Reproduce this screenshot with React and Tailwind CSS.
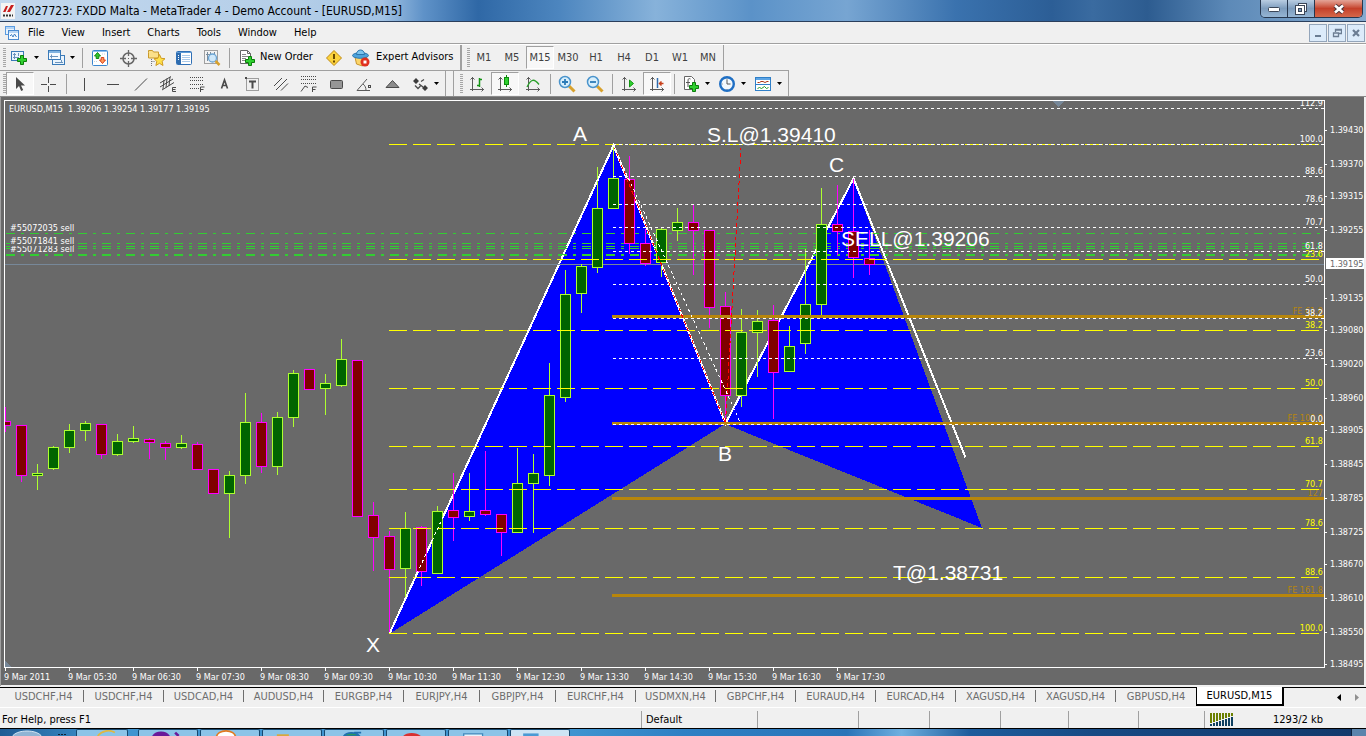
import clsx from 'clsx';

const menuItems = ['File', 'View', 'Insert', 'Charts', 'Tools', 'Window', 'Help'];
const periods = ['M1', 'M5', 'M15', 'M30', 'H1', 'H4', 'D1', 'W1', 'MN'];

const chartTabs = [
  'USDCHF,H4', 'USDCHF,H4', 'USDCAD,H4', 'AUDUSD,H4', 'EURGBP,H4', 'EURJPY,H4', 'GBPJPY,H4', 'EURCHF,H4',
  'USDMXN,H4', 'GBPCHF,H4', 'EURAUD,H4', 'EURCAD,H4', 'XAGUSD,H4', 'XAGUSD,H4', 'GBPUSD,H4',
];
const narrowTabs = ['EURJPY,H4', 'GBPJPY,H4'];

// One candle every 16px: [direction, high, body top, body bottom, low]
const candles = [
  ['d', 407, 421, 426, 432], ['d', 425, 425, 476, 482], ['u', 464, 473, 476, 490], ['u', 446, 447, 469, 470],
  ['u', 424, 430, 448, 453], ['u', 421, 423, 431, 441], ['d', 424, 424, 455, 459], ['u', 434, 441, 455, 456],
  ['u', 426, 438, 442, 443], ['d', 438, 439, 443, 459], ['d', 441, 443, 448, 460], ['u', 435, 443, 448, 449],
  ['d', 442, 444, 470, 470], ['d', 469, 469, 494, 494], ['u', 471, 475, 494, 538], ['u', 393, 422, 476, 484],
  ['d', 413, 422, 467, 473], ['u', 412, 417, 467, 475], ['u', 370, 373, 418, 427], ['d', 369, 369, 390, 390],
  ['u', 374, 383, 389, 415], ['u', 339, 359, 386, 387], ['d', 360, 360, 517, 517], ['d', 502, 515, 538, 571],
  ['d', 531, 536, 570, 633], ['u', 512, 528, 569, 597], ['d', 526, 527, 572, 586], ['u', 506, 511, 574, 574],
  ['d', 473, 510, 518, 541], ['u', 473, 511, 517, 521], ['d', 451, 510, 515, 516], ['d', 514, 514, 533, 556],
  ['u', 448, 483, 533, 533], ['u', 454, 473, 484, 533], ['u', 363, 395, 476, 486], ['u', 270, 294, 398, 402],
  ['u', 264, 266, 294, 313], ['u', 167, 208, 268, 273], ['u', 145, 178, 209, 209], ['d', 156, 179, 244, 254],
  ['d', 229, 243, 264, 266], ['u', 227, 229, 263, 277], ['u', 208, 222, 231, 241], ['d', 204, 222, 231, 275],
  ['d', 230, 230, 308, 328], ['d', 292, 306, 396, 421], ['u', 309, 332, 396, 407], ['u', 310, 321, 333, 377],
  ['d', 305, 320, 373, 419], ['u', 326, 346, 372, 372], ['u', 249, 304, 344, 354], ['u', 188, 224, 305, 315],
  ['d', 185, 224, 232, 255], ['d', 179, 231, 258, 278], ['d', 230, 258, 265, 275],
];

const yellowLevels = [[144, ''], [259, '23.6'], [330, '38.2'], [388, '50.0'], [446, '61.8'], [489, '70.7'], [528, '78.6'], [577, '88.6'], [633, '100.0']];
const whiteLevels = [
  [108, '112.9'], [144, '100.0'], [176, '88.6'], [204, '78.6'], [227, '70.7'], [251, '61.8'],
  [284, '50.0'], [318, '38.2'], [358, '23.6'], [424, '0.0'],
];
const goldLevels = [[316, 'FE 61.8'], [423, 'FE 100.0'], [498, '127'], [595, 'FE 161.8']];
const orderLines = [233, 243, 246, 248, 254, 255];
const orders = [['#55071283 sell', 252], ['#55071841 sell', 244], ['#55072035 sell', 231]];

const prices = [
  ['1.39430', 130], ['1.39370', 164], ['1.39315', 196], ['1.39255', 230], ['1.39135', 298], ['1.39080', 330],
  ['1.39020', 364], ['1.38960', 398], ['1.38905', 430], ['1.38845', 464], ['1.38785', 498], ['1.38725', 532],
  ['1.38670', 564], ['1.38610', 598], ['1.38550', 632], ['1.38495', 664],
];
const times = ['2011', '05:30', '06:30', '07:30', '08:30', '09:30', '10:30', '11:30', '12:30', '13:30', '14:30', '15:30', '16:30', '17:30'];

const notes = [
  ['A', 573, 141], ['X', 366, 652], ['B', 718, 461], ['C', 829, 172],
  ['S.L@1.39410', 707, 142], ['SELL@1.39206', 841, 246], ['T@1.38731', 893, 580],
];

function Icon({ children }) {
  return <svg viewBox="0 0 18 18" className="w-[18px] h-[18px] shrink-0" fill="none" aria-hidden="true">{children}</svg>;
}

function Plus({ x, y }) {
  return (
    <path d={`M${x + 3.5} ${y + 0.5}h3v3h3v3h-3v3h-3v-3h-3v-3h3z`} fill="#2fd02f" stroke="#0b7d0b" />
  );
}

function Axes() {
  return <path d="M4.5 2v14M2 14.5h14M2.5 4.5l2-2 2 2M13.5 12.5l2 2-2 2" stroke="#5a5a5a" />;
}

const icons = {
  newChart: (
    <Icon>
      <rect x="0.500" y="2.500" width="12" height="9" fill="#eaf4fd" stroke="#3a7ab8" />
      <path d="M3.500 4v6M2 8.500h6M2 5.500h3M7.500 4v3" stroke="#6a93bd" />
      <Plus x={6} y={6} />
    </Icon>
  ),
  profiles: (
    <Icon>
      <rect x="5.5" y="6.5" width="12" height="9" fill="#eaf4fd" stroke="#3a7ab8" />
      <rect x="1.5" y="1.5" width="12" height="9" fill="#f4faff" stroke="#3a7ab8" />
      <path d="M2 3h11" stroke="#7fb2e0" strokeWidth="2" />
      <path d="M3 7.5h8M4.5 5.5v4M14.5 11v3M8 13.5h8" stroke="#6a93bd" />
    </Icon>
  ),
  marketWatch: (
    <Icon>
      <rect x="1.5" y="1.5" width="15" height="15" rx="1" fill="#fff" stroke="#3a86d0" />
      <path d="M2 2.5h14" stroke="#8fc0ee" />
      <path d="M6.500 3.500l3 3.500h-1.700v2.500h-2.600v-2.500h-1.700z" fill="#2fc42f" stroke="#128a12" />
      <path d="M11.500 14.500l3-3.500h-1.700v-2.500h-2.600v2.500h-1.700z" fill="#ff9a5a" stroke="#d8401c" />
      <path d="M11 5h4M3 12.500h4" stroke="#c8d4e0" strokeDasharray="1 1" />
    </Icon>
  ),
  navigator: (
    <Icon>
      <circle cx="9.500" cy="9.500" r="5.500" stroke="#666" strokeWidth="1.500" />
      <path d="M9.500 1v6M9.500 12v6M1 9.500h6M12 9.500h6" stroke="#666" strokeWidth="1.300" />
      <rect x="9" y="9" width="1" height="1" fill="#666" />
    </Icon>
  ),
  favourites: (
    <Icon>
      <path d="M1.500 3.500v-2h4l1 1.500h5v6h-10z" fill="#fbe08a" stroke="#c99a2c" />
      <path d="M4.500 10v7M4.500 12.500h4" stroke="#777" strokeDasharray="1 1" />
      <path d="M12.500 5.500l1.700 3.800 3.800.4-2.900 2.600.9 4.200-3.500-2.200-3.600 2.200.9-4.200-2.800-2.600 3.800-.4z" fill="#ffe14a" stroke="#cf9a20" />
    </Icon>
  ),
  terminal: (
    <Icon>
      <rect x="1.500" y="2.500" width="15" height="13" rx="1" fill="#fff" stroke="#2f6fb5" />
      <path d="M2 3.500h14" stroke="#5c9bd8" />
      <rect x="2" y="4" width="4" height="11" fill="#2f6cae" />
      <path d="M3 6.500h1M3 8.500h1M3 10.500h1" stroke="#fff" />
      <path d="M7 6.500h8M7 8.500h8M7 10.500h8M7 12.500h8" stroke="#a9c9ea" />
    </Icon>
  ),
  tester: (
    <Icon>
      <rect x="1.500" y="1.500" width="13" height="13" fill="#f3f3f3" stroke="#a0a0a0" />
      <path d="M4.500 3v9M7.500 3v4M11.500 3v4M3 5.500h9" stroke="#7a8c9c" />
      <circle cx="9.500" cy="9" r="4" fill="#cfe8fa" stroke="#6ca5d4" strokeWidth="1.300" />
      <path d="M12.500 12l4 4" stroke="#d8a12c" strokeWidth="2.500" />
    </Icon>
  ),
  newOrder: (
    <Icon>
      <path d="M2.500 1.500h7l3 3v10h-10z" fill="#fff" stroke="#666" />
      <path d="M9.500 1.500v3h3" stroke="#666" />
      <path d="M4 5.500h4M4 7.500h6M4 9.500h4M4 11.500h3" stroke="#888" />
      <Plus x={7} y={7} />
    </Icon>
  ),
  metaEditor: (
    <Icon>
      <path d="M9 1.500L16.500 9 9 16.500 1.500 9z" fill="#fbd23c" stroke="#c08a14" strokeLinejoin="round" />
      <path d="M9 5v5" stroke="#6b4a00" strokeWidth="2" />
      <path d="M9 11.500v2" stroke="#6b4a00" strokeWidth="2" />
    </Icon>
  ),
  experts: (
    <Icon>
      <path d="M3 8l1.500 7 6 2 4-4V8z" fill="#fbd56a" stroke="#c9952c" />
      <ellipse cx="8.500" cy="6.500" rx="8" ry="2.800" fill="#4da3dc" stroke="#2b76ae" />
      <path d="M4.500 5.500c0-6 8-6 8 0z" fill="#7cc4ee" stroke="#2b76ae" />
      <circle cx="13" cy="13" r="4.500" fill="#e0301e" />
      <rect x="11.500" y="11.500" width="3" height="3" fill="#fff" />
    </Icon>
  ),
  cursor: <Icon><path d="M5 2v12l3-3 2.200 5 2-1-2.200-4.500h4z" fill="#4a4a4a" /></Icon>,
  crosshair: <Icon><path d="M9.500 2v6M9.500 11v6M2 9.500h6M11 9.500h6" stroke="#4a4a4a" /></Icon>,
  vline: <Icon><path d="M9.500 3v13" stroke="#4a4a4a" /></Icon>,
  hline: <Icon><path d="M4 9.500h12" stroke="#4a4a4a" /></Icon>,
  trend: <Icon><path d="M4 15.500l12-12" stroke="#4a4a4a" /></Icon>,
  channel: (
    <Icon>
      <path d="M1 12L14 4M1 8L12 1.500M3 15L15 7.500M5 5l-1 9M8 3.500l-1 9M11 2l-1 9" stroke="#4a4a4a" />
      <path d="M17 12.500h-3.500v4H17M13.500 14.500H16.500" stroke="#4a4a4a" />
    </Icon>
  ),
  fibo: (
    <Icon>
      <path d="M3 2.500h13M3 5.500h13M3 9.500h13M3 13.500h9" stroke="#4a4a4a" strokeDasharray="1 1" />
      <path d="M13.500 17v-5h4M13.500 14.500h3" stroke="#4a4a4a" />
    </Icon>
  ),
  textTool: <Icon><path d="M6.500 13.500L9.500 5l3 8.500M7.500 10.500h4" stroke="#4a4a4a" strokeWidth="1.600" /></Icon>,
  labelTool: (
    <Icon>
      <rect x="3.500" y="3.500" width="12" height="12" stroke="#4a4a4a" strokeDasharray="1 1" />
      <path d="M6 6.500h7M9.500 6.500v7" stroke="#4a4a4a" strokeWidth="2" />
      <rect x="2" y="2" width="2" height="2" fill="#4a4a4a" />
    </Icon>
  ),
  pitchfork: <Icon><path d="M3 11l8-8M5 15L16 4M10 15.500l7-7" stroke="#4a4a4a" /></Icon>,
  fiboExt: (
    <Icon>
      <path d="M2 1.500h15M2 4.500h15M2 8.500h15" stroke="#4a4a4a" strokeDasharray="1 1" />
      <path d="M2 16.500l4-5.500 3 1.500M13.500 17v-5h4M13.500 14.500h3" stroke="#4a4a4a" />
    </Icon>
  ),
  rectangle: <Icon><rect x="3.500" y="5.500" width="12" height="8" rx="1" fill="#969696" stroke="#4a4a4a" /></Icon>,
  angle: (
    <Icon>
      <path d="M2 15.500h13M2 15.500L12 4M8 9c2 1.500 3 3.500 3 6.500" stroke="#5a5a5a" />
      <rect x="13.500" y="10.500" width="2" height="2" stroke="#4a4a4a" />
    </Icon>
  ),
  triangle: <Icon><path d="M3 12.500l6.500-7 6.500 7z" fill="#8c8c8c" stroke="#4a4a4a" /></Icon>,
  arrows: (
    <Icon>
      <path d="M5 3l3 3-3 3-3-3zM14 10l3 3-3 3-3-3z" fill="#3c3c3c" />
      <path d="M4 10.500l3 3 2.500-2.500M10 6.500l3-2M8 9l4 3" stroke="#4a4a4a" strokeWidth="1.300" />
    </Icon>
  ),
  bars: <Icon><Axes /><path d="M11.500 3v9M9 10.500h2.500M11.500 4.500H14" stroke="#149414" strokeWidth="1.500" /></Icon>,
  candlesIcon: <Icon><Axes /><path d="M10.500 0v12" stroke="#0d8a0d" /><rect x="8.500" y="2.500" width="4" height="7" fill="#2fd02f" stroke="#0d8a0d" /></Icon>,
  line: <Icon><Axes /><path d="M3 12c4-8 7-9 12-2.500" stroke="#2aa02a" strokeWidth="1.300" /></Icon>,
  zoomIn: (
    <Icon>
      <path d="M11 11l5.500 5.500" stroke="#d8a12c" strokeWidth="3" />
      <circle cx="7" cy="7" r="5.500" fill="#d8effc" stroke="#4a94cc" strokeWidth="1.500" />
      <path d="M4 7h6M7 4v6" stroke="#2c7bb8" strokeWidth="1.800" />
    </Icon>
  ),
  zoomOut: (
    <Icon>
      <path d="M11 11l5.500 5.500" stroke="#d8a12c" strokeWidth="3" />
      <circle cx="7" cy="7" r="5.500" fill="#d8effc" stroke="#4a94cc" strokeWidth="1.500" />
      <path d="M4 7h6" stroke="#2c7bb8" strokeWidth="1.800" />
    </Icon>
  ),
  autoScroll: <Icon><Axes /><path d="M9.500 5v7l4-3.500z" fill="#2fd02f" stroke="#149414" /></Icon>,
  chartShift: <Icon><Axes /><path d="M9.500 3v10" stroke="#2f6cae" strokeWidth="1.500" /><path d="M15.500 8.500h-4M13.500 6.500l-2 2 2 2" stroke="#c8401c" strokeWidth="1.500" /></Icon>,
  indicators: (
    <Icon>
      <path d="M2.500 1.500h7l3 3v10h-10z" fill="#fff" stroke="#666" />
      <path d="M8.500 4c-2-1-2.500 0-2.500 2v6M4 7.500h4" stroke="#555" />
      <Plus x={7} y={7} />
    </Icon>
  ),
  clock: (
    <Icon>
      <circle cx="9" cy="9" r="6.800" fill="#f2f8fd" stroke="#1f6fc4" strokeWidth="2.400" />
      <path d="M9 4.500V9h3.500" stroke="#555" />
      <path d="M9 3.500v.8M9 14v.8M3.800 9h.8" stroke="#777" />
    </Icon>
  ),
  templates: (
    <Icon>
      <rect x="1.500" y="2.500" width="15" height="13" fill="#fff" stroke="#2f7fc8" />
      <path d="M2 4h14" stroke="#5ca4e4" strokeWidth="2" />
      <path d="M2 9.500h14" stroke="#2f7fc8" />
      <path d="M3.500 7.500h2l1.500-1h2l2 1 2-1h1.500" stroke="#b03818" />
      <path d="M3.500 13.500l2-1 2 1 3-2 2 2 2-1" stroke="#229a22" />
    </Icon>
  ),
};

function Grip() {
  return <div className="w-1.5 h-5 pl-[3px] self-center"><div className="w-[3px] h-full bg-[repeating-linear-gradient(to_bottom,#a6a6a6_0_1px,#f0f0f0_1px_2px)]" /></div>;
}

function Separator({ wide }) {
  return <div className={clsx('h-5 flex justify-center self-center shrink-0', wide ? 'w-2' : 'w-1.5')}><div className="w-px h-full bg-[#a0a0a0]" /></div>;
}

function ToolButton({ icon, label, active, menu }) {
  return (
    <button
      type="button"
      aria-label={label}
      className={clsx('h-[23px] flex items-center shrink-0', menu ? 'w-9' : 'w-7')}
    >
      <span className={clsx(
        'w-7 h-full flex items-center justify-center',
        active && 'bg-[#f8f8f8] border border-t-[#a0a0a0] border-l-[#a0a0a0] border-r-white border-b-white'
      )}>
        {icons[icon]}
      </span>
      {menu && <svg viewBox="0 0 5 3" className="w-[5px] h-[3px]" aria-hidden="true"><path d="M0 0h5L2.500 3z" fill="#000" /></svg>}
    </button>
  );
}

function TitleBar() {
  return (
    <header className="h-[22px] shrink-0 flex items-start justify-between border-b border-[#2b3f5c] bg-[linear-gradient(90deg,#c3d8ee_0%,#b4cee8_22%,#a2c3e4_28%,#5f92c8_31%,#2f68a6_35%,#4d86bf_41%,#87b2da_48%,#5b92c8_55%,#77a5d2_62%,#3a72ae_70%,#2c5e96_77%,#3a6ba0_80%,#2d5c90_84%,#5d8ab8_90%,#86abd0_100%)]">
      <div className="h-[21px] flex items-center gap-1.5 pl-[1px]">
        <svg viewBox="0 0 14 16" className="w-3.5 h-4" aria-hidden="true">
          <rect width="14" height="16" fill="#f4f4f4" />
          <path d="M2 9L5 3h2L4.500 9zM6 9l4-7h3l-4 7z" fill="#c81e1e" />
          <path d="M2 12.500h10" stroke="#333" strokeWidth="2" strokeDasharray="2 1" />
        </svg>
        <h1 className="text-xs text-black whitespace-nowrap">8027723: FXDD Malta - MetaTrader 4 - Demo Account - [EURUSD,M15]</h1>
      </div>
      <div className="h-[18px] mr-[3px] flex border border-t-0 border-[#26374f] rounded-b-[5px] overflow-hidden">
        <button type="button" aria-label="Minimize" className="w-[27px] flex items-center justify-center border-r border-[#26374f] bg-linear-to-b from-[#b9cde2] via-[#7d9cbd] to-[#95b5d4]">
          <svg viewBox="0 0 12 6" className="w-3 h-1.5"><rect x=".5" y="1.500" width="11" height="4" rx="1" fill="#fff" stroke="#3b4658" /></svg>
        </button>
        <button type="button" aria-label="Restore" className="w-[27px] flex items-center justify-center border-r border-[#26374f] bg-linear-to-b from-[#b9cde2] via-[#7d9cbd] to-[#95b5d4]">
          <svg viewBox="0 0 12 12" className="w-3 h-3">
            <rect x="3.500" y=".5" width="8" height="8" fill="#fff" stroke="#3b4658" />
            <rect x=".5" y="2.500" width="9" height="9" fill="#fff" stroke="#3b4658" />
            <rect x="3.500" y="5.500" width="3" height="3" fill="#7d9cbd" stroke="#3b4658" />
          </svg>
        </button>
        <button type="button" aria-label="Close" className="w-[47px] flex items-center justify-center bg-linear-to-b from-[#e3a498] via-[#c4402a] to-[#d4674a]">
          <svg viewBox="0 0 12 10" className="w-3 h-2.5">
            <path d="M2 1.500l8 7M10 1.500l-8 7" stroke="#4a3238" strokeWidth="4.500" />
            <path d="M2 1.500l8 7M10 1.500l-8 7" stroke="#fff" strokeWidth="2.600" />
          </svg>
        </button>
      </div>
    </header>
  );
}

function MdiButton({ label, children }) {
  return (
    <button type="button" aria-label={label} className="w-[18px] h-[18px] flex items-center justify-center border border-[#93a5ba] bg-[#dcebfa]">
      <svg viewBox="0 0 10 10" className="w-2.5 h-2.5" fill="none" stroke="#6b7d93">{children}</svg>
    </button>
  );
}

function MenuBar() {
  return (
    <nav className="h-[22px] shrink-0 flex items-center justify-between border-b border-[#a0a0a0] pr-px">
      <div className="flex items-center gap-px pl-[5px]">
        <svg viewBox="0 0 14 14" className="w-3.5 h-3.5" fill="none" aria-hidden="true">
          <rect x=".5" y=".5" width="9" height="8" fill="#e8f3fd" stroke="#5a9be0" />
          <rect x="3.500" y="4.500" width="10" height="9" fill="#f4faff" stroke="#4a8ad0" />
          <path d="M1 2h8M4 6h9" stroke="#7fb4ec" />
          <path d="M5 10l1.500-1.500L8 11l1.500-3 2 3" stroke="#3f7fc4" />
        </svg>
        {menuItems.map(item => (
          <button key={item} type="button" className="px-2 text-[11px] leading-4">{item}</button>
        ))}
      </div>
      <div className="flex gap-px">
        <MdiButton label="Minimize chart"><path d="M2 8h6" strokeWidth="2" /></MdiButton>
        <MdiButton label="Restore chart"><path d="M3.500 4V1.500h6v4H7M3 2h7M1.500 5v3.500h5V5zM1 5h6" strokeWidth="1.300" /></MdiButton>
        <MdiButton label="Close chart"><path d="M2 2l6 6M8 2L2 8" strokeWidth="2.200" /></MdiButton>
      </div>
    </nav>
  );
}

function Toolbars() {
  return (
    <>
      <div className="h-[26px] shrink-0 flex border-t border-white">
        <div className="flex items-center pr-[5px] border-r-2 border-[#a0a0a0]">
          <Grip />
          <ToolButton icon="newChart" label="New chart" menu />
          <ToolButton icon="profiles" label="Profiles" menu />
          <Separator wide />
          <ToolButton icon="marketWatch" label="Market watch" />
          <ToolButton icon="navigator" label="Data window" />
          <ToolButton icon="favourites" label="Navigator" />
          <ToolButton icon="terminal" label="Terminal" />
          <ToolButton icon="tester" label="Strategy tester" />
          <Separator />
          <button type="button" className="w-[88px] pl-1.5 flex items-center gap-1 text-[11px] whitespace-nowrap">{icons.newOrder}New Order</button>
          <ToolButton icon="metaEditor" label="MetaEditor" />
          <button type="button" className="w-[107px] pl-1 flex items-center gap-1.5 text-[11px] whitespace-nowrap">{icons.experts}Expert Advisors</button>
        </div>
        <div className="flex items-center pl-0.5 pr-px border-r border-[#a0a0a0]">
          <Grip />
          {periods.map(p => (
            <button
              key={p}
              type="button"
              className={clsx(
                'w-7 h-[23px] text-[11px] leading-4 text-center text-[#404040]',
                p === 'M15' && 'bg-[#f8f8f8] border border-t-[#a0a0a0] border-l-[#a0a0a0] border-r-white border-b-white'
              )}
            >
              <span className="-mx-2">{p}</span>
            </button>
          ))}
        </div>
      </div>
      <div className="h-[27px] shrink-0 flex border-b border-[#8a8a8a]">
        <div className="flex items-center pr-[3px] border-t border-r border-[#a0a0a0]">
          <Grip />
          <ToolButton icon="cursor" label="Cursor" active />
          <ToolButton icon="crosshair" label="Crosshair" />
          <Separator wide />
          <ToolButton icon="vline" label="Vertical line" />
          <ToolButton icon="hline" label="Horizontal line" />
          <ToolButton icon="trend" label="Trendline" />
          <ToolButton icon="channel" label="Equidistant channel" />
          <ToolButton icon="fibo" label="Fibonacci retracement" />
          <ToolButton icon="textTool" label="Text" />
          <ToolButton icon="labelTool" label="Text label" />
          <ToolButton icon="pitchfork" label="Andrews pitchfork" />
          <ToolButton icon="fiboExt" label="Fibonacci expansion" />
          <ToolButton icon="rectangle" label="Rectangle" />
          <ToolButton icon="angle" label="Trendline by angle" />
          <ToolButton icon="triangle" label="Triangle" />
          <ToolButton icon="arrows" label="Arrows" menu />
        </div>
        <div className="w-2 border-t border-r border-[#a0a0a0]" />
        <div className="flex items-center pl-[3px] pr-[3px] border-t border-r border-[#a0a0a0]">
          <Grip />
          <ToolButton icon="bars" label="Bar chart" />
          <ToolButton icon="candlesIcon" label="Candlesticks" active />
          <ToolButton icon="line" label="Line chart" />
          <Separator />
          <ToolButton icon="zoomIn" label="Zoom in" />
          <ToolButton icon="zoomOut" label="Zoom out" />
          <Separator />
          <ToolButton icon="autoScroll" label="Auto scroll" />
          <ToolButton icon="chartShift" label="Chart shift" active />
          <Separator />
          <ToolButton icon="indicators" label="Indicators" menu />
          <ToolButton icon="clock" label="Periods" menu />
          <ToolButton icon="templates" label="Templates" menu />
        </div>
      </div>
    </>
  );
}

function Chart() {
  return (
    <main className="flex-1 min-h-0 bg-[#696969] border-l border-[#a0a0a0]">
      <svg viewBox="1 97 1365 589" preserveAspectRatio="xMinYMin meet" className="w-full h-full block text-[9px]" shapeRendering="crispEdges" role="img" aria-label="EURUSD M15 candlestick chart">
        <defs>
          <clipPath id="plot"><rect x="5" y="101" width="1319" height="566" /></clipPath>
        </defs>
        <rect x="0" y="97" width="1364" height="588" fill="#696969" />
        <rect x="1364" y="97" width="2" height="589" fill="#f0f0f0" />
        <rect x="0" y="685" width="1366" height="1" fill="#f0f0f0" />

        <g clipPath="url(#plot)">
          {/* Harmonic pattern */}
          <path d="M389 634L613 145 725 424z M725 424L853 178 982 528z" fill="#0000ff" />
          <path d="M389.500 633.500L613.500 145.500 725.500 423.500 853.500 178.500 965.500 457.500" stroke="#fff" strokeWidth="2" fill="none" />

          {orderLines.map(y => (
            <path key={y} d={`M6 ${y + 0.5}H1324`} stroke="#32cd32" strokeDasharray="9 6 3 6" />
          ))}
          <path d="M5 264.500H1324" stroke="#778899" />

          {candles.map(([dir, high, top, bottom, low], i) => {
            const x = i * 16;
            const up = dir === 'u';
            const edge = up ? '#adff2f' : '#ff00ff';
            return (
              <g key={x}>
                <path d={`M${x + 5.5} ${high}V${low}`} stroke={edge} />
                <rect x={x + 0.5} y={top + 0.5} width="10" height={bottom - top - 1} fill={up ? '#006400' : '#800000'} stroke={edge} />
              </g>
            );
          })}

          {goldLevels.map(([y, label]) => (
            <g key={label}>
              <path d={`M612 ${y + 0.5}H1324`} stroke="#b8860b" strokeWidth="3" />
              <text x="1323" y={y - 2} textAnchor="end" fill="#b8860b">{label}</text>
            </g>
          ))}
          {yellowLevels.map(([y, label]) => (
            <g key={y}>
              <path d={`M389 ${y + 0.5}H1324`} stroke="#ffff00" strokeDasharray="18 6" />
              <text x="1323" y={y - 2} textAnchor="end" fill="#ffff00">{label}</text>
            </g>
          ))}
          {whiteLevels.map(([y, label]) => (
            <g key={y}>
              <path d={`M613 ${y + 0.5}H1324`} stroke="#fff" strokeDasharray="3 3" />
              <text x="1323" y={y - 2} textAnchor="end" fill="#fff">{label}</text>
            </g>
          ))}

          {/* Swing measures */}
          <path d="M613.500 145.500L725.500 423.500 741 148" stroke="#ff0000" strokeDasharray="4 3" fill="none" />
          <path d="M613.500 145.500L741 424M389.500 633.500L613.500 145.500" stroke="#fff" strokeDasharray="3 3" fill="none" />

          {orders.map(([label, y]) => (
            <g key={label}>
              <rect x="10" y={y - 9} width="63" height="11" fill="#696969" />
              <text x="10" y={y} fill="#fff">{label}</text>
            </g>
          ))}
          <path d="M1053 101h11l-5.500 6z M5 661v6h6z" fill="#778899" />
        </g>

        <g fill="#fff">
          <text x="9" y="112" xmlSpace="preserve">EURUSD,M15  1.39206 1.39254 1.39177 1.39195</text>
          {notes.map(([label, x, y]) => (
            <text key={label} x={x} y={y} className="font-['Liberation_Sans',sans-serif] text-[21px]">{label}</text>
          ))}
        </g>

        {/* Frame and axes */}
        <path d="M4.500 667.500V100.500H1324.500V667.500z" stroke="#fff" fill="none" />
        {prices.map(([price, y]) => (
          <g key={price}>
            <path d={`M1325 ${y + 0.5}h2`} stroke="#fff" />
            <text x="1330" y={y + 3} fill="#fff">{price}</text>
          </g>
        ))}
        <rect x="1326" y="258" width="38" height="11" fill="#fff" />
        <text x="1330" y="267" fill="#696969">1.39195</text>
        {times.map((time, i) => (
          <g key={time}>
            <path d={`M${i * 64 + 5.5} 668v3`} stroke="#fff" />
            <text x={i * 64 + 4} y="680" fill="#fff">9 Mar {time}</text>
          </g>
        ))}
      </svg>
    </main>
  );
}

function ChartTabs() {
  return (
    <nav className="h-[22px] shrink-0 flex border-b border-white text-[11px] leading-4">
      <div className="w-1 mt-px border-t border-black" />
      {chartTabs.map((tab, i) => (
        <button
          key={i}
          type="button"
          className={clsx('mt-px h-5 flex justify-center border-t border-black text-[#6d6d6d]', narrowTabs.includes(tab) ? 'w-19' : 'w-20')}
        >
          <span className="flex-1 mt-0.5 h-3.5 leading-3.5">{tab}</span>
          {i < chartTabs.length - 1 && <span className="w-px h-3 mt-0.5 bg-[#6d6d6d]" />}
        </button>
      ))}
      <button type="button" className="mt-px w-22 h-[19px] bg-white border border-t-0 border-black border-b-2 border-r-2 text-black">EURUSD,M15</button>
      <div className="flex-1 mt-px h-5 flex items-center justify-end gap-3.5 pr-[7px] border-t border-black">
        <button type="button" aria-label="Scroll tabs left"><svg viewBox="0 0 4 7" className="w-1 h-[7px]"><path d="M4 0v7L0 3.500z" /></svg></button>
        <button type="button" aria-label="Scroll tabs right"><svg viewBox="0 0 4 7" className="w-1 h-[7px]"><path d="M0 0v7l4-3.500z" fill="#909090" /></svg></button>
      </div>
    </nav>
  );
}

function StatusBar() {
  return (
    <footer className="h-[21px] shrink-0 flex items-end border-b border-black text-[11px] leading-[18px] [&>div]:h-[17px]">
      <div className="flex-1 pl-0.5 text-black">For Help, press F1</div>
      <div className="w-[116px] pl-1 border-l border-[#a0a0a0]">Default</div>
      <div className="w-[101px] border-l border-[#a0a0a0]" />
      <div className="w-[71px] border-l border-[#a0a0a0]" />
      <div className="w-[71px] border-l border-[#a0a0a0]" />
      <div className="w-[68px] border-l border-[#a0a0a0]" />
      <div className="w-[70px] border-l border-[#a0a0a0]" />
      <div className="w-[66px] border-l border-[#a0a0a0]" />
      <div className="w-[162px] pl-[5px] flex items-center gap-10 border-l border-[#a0a0a0]">
        <svg viewBox="0 0 23 13" className="w-[23px] h-[13px]" shapeRendering="crispEdges" aria-hidden="true">
          {[0, 1, 2, 3, 4, 5, 6, 7].map(i => (
            <g key={i}>
              <rect x={i * 3} y="0" width="2" height={10 - i} fill="#6b8000" />
              <rect x={i * 3} y={11 - i} width="2" height={2 + i} fill="#0f4060" />
            </g>
          ))}
        </svg>
        <span>1293/2 kb</span>
      </div>
    </footer>
  );
}

const tasks = [
  { name: 'Internet Explorer', width: 'w-[52px] mr-2.5', art: <path d="M20 7c4-6 14-8 20-4" stroke="#e0b840" strokeWidth="2" fill="none" /> },
  { name: 'Messenger', width: 'w-[60px] mr-0.5', art: <path d="M13 7c3-5 14-5 17 0zM38 3l4 4" fill="#6a1a9a" stroke="#6a1a9a" strokeWidth="3" /> },
  { name: 'Clock', width: 'w-[60px] mr-0.5', art: <path d="M14 8a11 7 0 0 1 22 0" fill="#fff" stroke="#e07a20" strokeWidth="2" /> },
  { name: 'Folder', width: 'w-[60px] mr-0.5', art: <path d="M12 7V5h14v2z" fill="#d8a83c" /> },
  { name: 'Network', width: 'w-[60px] mr-0.5', art: <path d="M18 7c3-5 14-5 18 0zM30 3h8" fill="#2a9a5a" stroke="#2070b0" strokeWidth="2" /> },
  { name: 'Browser', width: 'w-[60px] mr-0.5', art: <path d="M14 8c3-6 18-6 22 0z" fill="#d83030" /> },
  { name: 'Notes', width: 'w-[60px] mr-0.5', art: <path d="M13 8V4.500h22V8" fill="#e8f4fc" stroke="#3f88bc" strokeWidth="1.500" /> },
  { name: 'MetaTrader', width: 'w-[60px]', art: <path d="M10 8V4h18v4z" fill="#4a9ad4" />, active: true },
];

function Taskbar() {
  return (
    <div className="h-[7px] shrink-0 flex overflow-hidden bg-[linear-gradient(90deg,#1f5c94_0%,#3f94d0_8%,#3f94d0_42%,#2f80c4_50%,#2a74b8_62%,#6fb0e0_66%,#1d5c9c_71%,#174a84_80%,#12386a_100%)]">
      <button type="button" aria-label="Start" className="w-[76px]">
        <svg viewBox="0 0 76 7" className="w-[76px] h-[7px]">
          <path d="M12 8c4-8 26-8 30 0z" fill="#8fb4d4" stroke="#d4e6f4" />
          <path d="M58 5.500h8" stroke="#123" strokeDasharray="2 1" />
        </svg>
      </button>
      {tasks.map(task => (
        <button
          key={task.name}
          type="button"
          aria-label={task.name}
          className={clsx('shrink-0 border border-b-0 border-[#16486f] rounded-t-[2px]', task.width, task.active ? 'bg-[#cde4f4]' : 'bg-[#8cc4e8]')}
        >
          <svg viewBox="0 0 50 7" className="w-[50px] h-1.5">{task.art}</svg>
        </button>
      ))}
      <div className="flex-1" />
      <button type="button" aria-label="Show desktop" className="w-[15px] border-l border-[#0c2440] bg-[#5a84ac]" />
    </div>
  );
}

export default function App() {
  return (
    <div className="h-screen flex flex-col overflow-hidden bg-[#f0f0f0] text-black font-['DejaVu_Sans_Condensed','Noto_Sans',sans-serif]">
      <TitleBar />
      <MenuBar />
      <Toolbars />
      <Chart />
      <ChartTabs />
      <StatusBar />
      <Taskbar />
    </div>
  );
}
